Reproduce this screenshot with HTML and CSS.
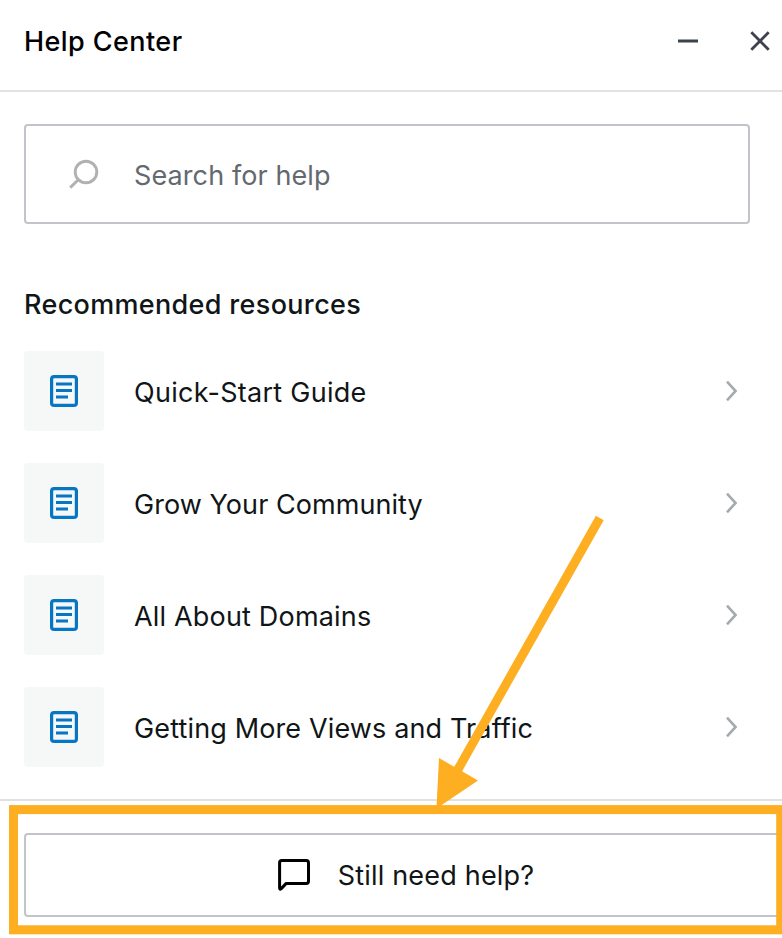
FILE: index.html
```html
<!DOCTYPE html>
<html lang="en">
<head>
<meta charset="utf-8">
<title>Help Center</title>
<link rel="stylesheet" href="styles.css">
</head>
<body>
<svg class="symbols" aria-hidden="true">
  <symbol id="doc" viewBox="0 0 28 32"><rect x="1.6" y="1.6" width="24.8" height="28.8" rx="2.5" fill="none" stroke="#0675c4" stroke-width="3.2"/><path d="M6 8.9h16M6 15.5h16M6 22h12" fill="none" stroke="#0675c4" stroke-width="3"/></symbol>
  <symbol id="chevron" viewBox="0 0 14 22"><path d="M2 1.7L10.6 11L2 20.3" fill="none" stroke="#a7aaad" stroke-width="2.6"/></symbol>
</svg>
<main class="panel">
  <header class="header">
    <h1 class="title title-main">Help Center</h1>
    <div class="controls">
      <svg width="20" height="20" viewBox="0 0 20 20"><path d="M0 10h20" stroke="#3c434a" stroke-width="3"/></svg>
      <svg width="20" height="20" viewBox="0 0 20 20"><path d="M1.3 1.3L18.7 18.7M18.7 1.3L1.3 18.7" stroke="#3c434a" stroke-width="2.8"/></svg>
    </div>
  </header>
  <section class="content">
    <div class="search">
      <svg width="32" height="32" viewBox="0 0 32 32"><circle cx="18" cy="14" r="10.8" fill="none" stroke="#b1b1b1" stroke-width="2.9"/><path d="M10.3 21.7L2.2 29.6" stroke="#b1b1b1" stroke-width="2.9"/></svg>
      <span class="placeholder">Search for help</span>
    </div>
    <h2 class="title title-resources">Recommended resources</h2>
    <ul class="list">
      <li class="row"><span class="tile"><svg width="28" height="32"><use href="#doc"/></svg></span><span class="label label-guide">Quick-Start Guide</span><svg class="chevron" width="14" height="22"><use href="#chevron"/></svg></li>
      <li class="row"><span class="tile"><svg width="28" height="32"><use href="#doc"/></svg></span><span class="label label-community">Grow Your Community</span><svg class="chevron" width="14" height="22"><use href="#chevron"/></svg></li>
      <li class="row"><span class="tile"><svg width="28" height="32"><use href="#doc"/></svg></span><span class="label label-domains">All About Domains</span><svg class="chevron" width="14" height="22"><use href="#chevron"/></svg></li>
      <li class="row"><span class="tile"><svg width="28" height="32"><use href="#doc"/></svg></span><span class="label label-traffic">Getting More Views and Traffic</span><svg class="chevron" width="14" height="22"><use href="#chevron"/></svg></li>
    </ul>
  </section>
  <footer class="footer">
    <div class="button">
      <svg width="32" height="32" viewBox="0 0 32 32"><path d="M3.8 1.6H28.2Q30.5 1.6 30.5 3.9V22Q30.5 24.4 28.2 24.4H8.2L3.3 29.6Q1.6 31 1.6 28.8V3.8Q1.6 1.6 3.8 1.6Z" fill="none" stroke="#000" stroke-width="3" stroke-linejoin="round"/></svg>
      <span class="button-label">Still need help?</span>
    </div>
  </footer>
  <svg class="annotation" width="782" height="938" viewBox="0 0 782 938" aria-hidden="true">
    <rect x="13.5" y="809.6" width="767.2" height="120.2" fill="none" stroke="#fdae21" stroke-width="9"/>
    <path d="M599.8 518L456.5 772" stroke="#fdae21" stroke-width="9"/>
    <path d="M439 758L478 780.4L436.5 808.5Z" fill="#fdae21"/>
  </svg>
</main>
</body>
</html>
```
FILE: styles.css
```css
* { box-sizing: border-box; }
body { margin: 0; background: #fff; color: #101517; font: 400 28px/32px Inter, "Liberation Sans", sans-serif; }
svg { display: block; flex: none; }
.symbols { position: absolute; width: 0; height: 0; }
.panel { position: relative; width: 782px; height: 938px; overflow: hidden; }
.header { height: 92px; padding: 0 12px 9px 24px; border-bottom: 2px solid #e2e2e2; display: flex; align-items: center; justify-content: space-between; }
.title { margin: 0; font-size: 27px; font-weight: 500; white-space: nowrap; }
.title-main { color: #000; padding-top: 2px; letter-spacing: 0.43px; }
.controls { display: flex; gap: 52px; }
.content { padding: 32px 32px 32px 24px; }
.search { height: 100px; border: 2px solid #c3c4ca; border-radius: 4px; padding: 0 42px; display: flex; align-items: center; gap: 34px; color: #646970; }
.title-resources { margin: 65px 0 30px; letter-spacing: 0.33px; }
.placeholder, .label, .button-label { font-size: 27px; white-space: nowrap; }
.placeholder { padding-top: 4px; letter-spacing: 0.1px; }
.list { list-style: none; margin: 0; padding: 0; display: grid; gap: 32px; }
.row { height: 80px; display: flex; align-items: center; padding-right: 11px; }
.tile { width: 80px; height: 80px; margin-right: 30px; border-radius: 4px; background: #f6f7f7; display: flex; align-items: center; justify-content: center; }
.label { padding-top: 4px; }
.label-guide { letter-spacing: 0.27px; }
.label-community { letter-spacing: 0.06px; }
.label-domains { letter-spacing: 0.18px; }
.label-traffic { letter-spacing: 0.14px; }
.chevron { margin-left: auto; }
.footer { border-top: 2px solid #e2e2e2; padding: 32px 0 0 24px; }
.button { width: 764px; height: 84px; border: 2px solid #c3c4ca; border-radius: 4px; display: flex; align-items: center; justify-content: center; gap: 28px; }
.button-label { padding-top: 2px; letter-spacing: 0.19px; }
.annotation { position: absolute; left: 0; top: 0; }
```
